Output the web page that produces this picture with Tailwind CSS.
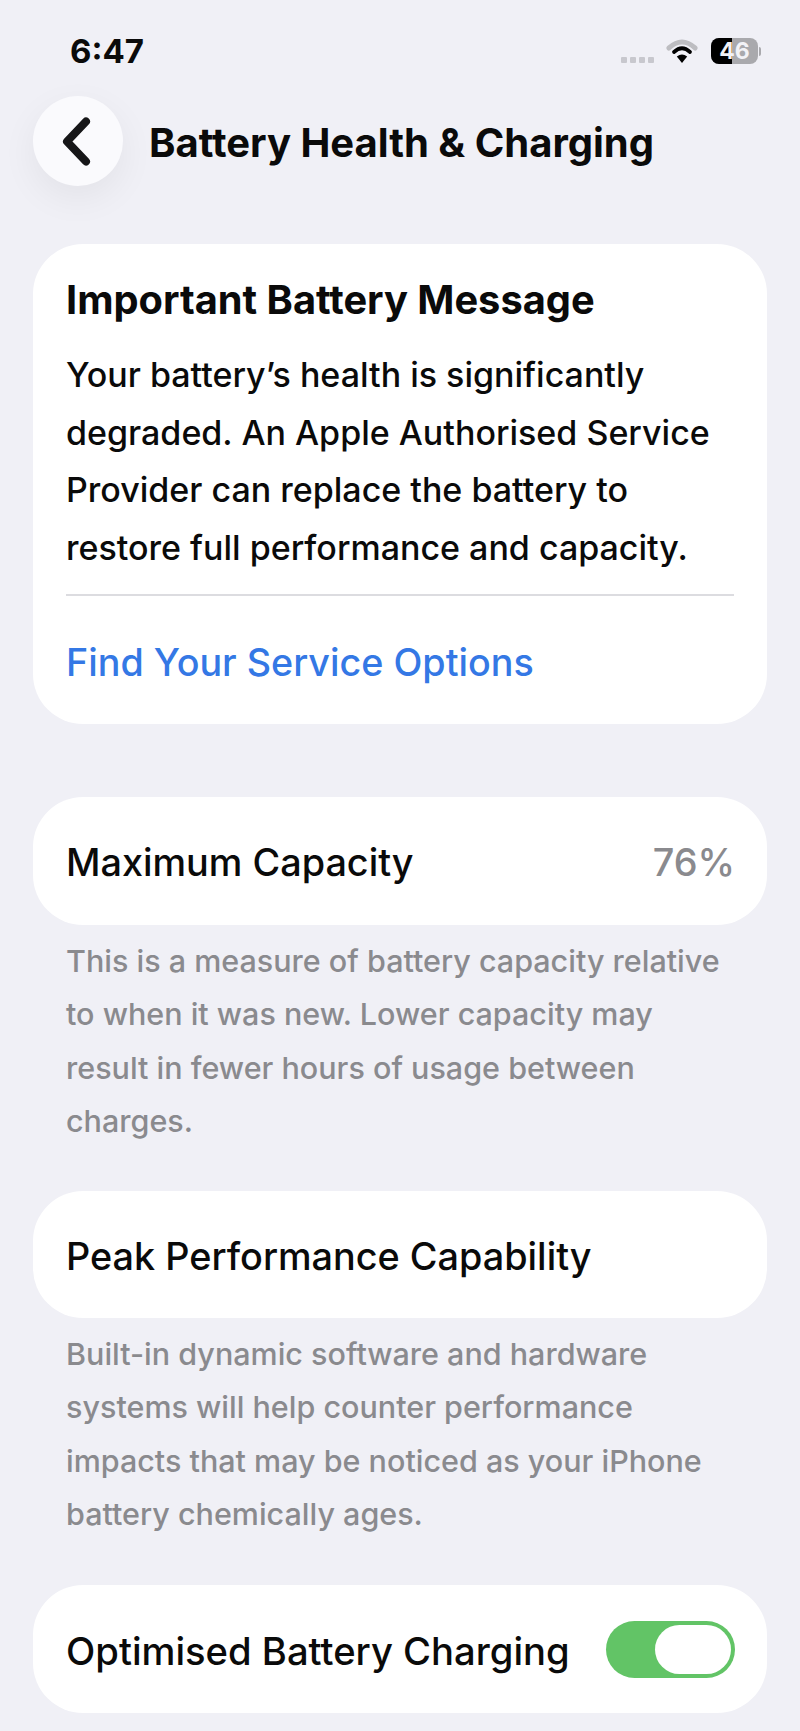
<!DOCTYPE html>
<html>
  <head>
    <title>Battery Health &amp; Charging</title>
    <script src="https://cdn.jsdelivr.net/npm/@tailwindcss/browser@4"></script>
  </head>
  <body class="bg-[#f0f0f6] font-['Inter','Liberation_Sans',sans-serif] text-[#0a0a0a] overflow-hidden">
    <div class="w-[800px] h-[1731px] overflow-hidden">
      <!-- status bar -->
      <div class="flex items-center justify-between h-[50px] mt-[26px] pl-[70px] pr-[39px]">
        <span class="text-[33px] font-bold leading-none">6:47</span>
        <div class="flex items-center">
          <div class="flex gap-[3px] mt-[18px] mr-[12px]">
            <span class="w-[6px] h-[6px] rounded-[1px] bg-[#c8c8ce]"></span>
            <span class="w-[6px] h-[6px] rounded-[1px] bg-[#c8c8ce]"></span>
            <span class="w-[6px] h-[6px] rounded-[1px] bg-[#c8c8ce]"></span>
            <span class="w-[6px] h-[6px] rounded-[1px] bg-[#c8c8ce]"></span>
          </div>
          <svg width="32" height="26" viewBox="0 0 34 26" class="mr-[13px]" preserveAspectRatio="none">
            <path d="M3 10 Q17 -2 31 10" fill="none" stroke="#bdbdc1" stroke-width="5" stroke-linecap="round" />
            <path d="M8.500 14 Q17 6.500 25.500 14" fill="none" stroke="#000" stroke-width="4" stroke-linecap="round" />
            <path d="M17 25 L11.500 18.500 Q17 14.500 22.500 18.500 Z" fill="#000" />
          </svg>
          <div class="relative w-[47px] h-[26px] rounded-[8px] overflow-hidden bg-[#a9a9ad] flex items-center justify-center">
            <div class="absolute left-0 top-0 bottom-0 w-[21px] bg-black"></div>
            <span class="relative text-[23px] font-bold leading-none text-[#f2f2f6]">46</span>
          </div>
          <div class="w-[2px] h-[9px] ml-[1px] rounded-r-full bg-[#a9a9ad]"></div>
        </div>
      </div>

      <!-- header -->
      <div class="flex items-center h-[90px] mt-[20px] pl-[33px]">
        <button class="flex items-center justify-center w-[90px] h-[90px] rounded-full bg-[#fafafd] shadow-[0_12px_36px_rgba(0,0,0,0.06)]">
          <svg width="31" height="49" viewBox="0 0 31 49" class="mr-[3px]">
            <path d="M25 4.500 L6 24.500 L25 44.500" fill="none" stroke="#161618" stroke-width="8" stroke-linecap="round" stroke-linejoin="round" />
          </svg>
        </button>
        <h1 class="ml-[26px] mt-[4px] text-[40px] font-bold leading-none">Battery Health &amp; Charging</h1>
      </div>

      <div class="mx-[33px] mt-[58px]">
        <!-- battery message -->
        <div class="bg-white rounded-[50px] h-[480px] px-[33px] pt-[36px]">
          <h2 class="text-[39.800px] font-bold leading-[40px]">Important Battery Message</h2>
          <p class="mt-[26px] text-[34px] font-medium leading-[57.700px]">Your battery’s health is significantly degraded. An Apple Authorised Service Provider can replace the battery to restore full performance and capacity.</p>
          <div class="mt-[17px] h-[2px] bg-[#dcdce0]"></div>
          <div class="mt-[44px] text-[37.700px] font-medium leading-[44px] text-[#3478e5]">Find Your Service Options</div>
        </div>

        <!-- maximum capacity -->
        <div class="flex items-center justify-between bg-white rounded-[50px] h-[128px] mt-[73px] pl-[33px] pr-[32px] pt-[2px] text-[37.800px] font-medium">
          <span>Maximum Capacity</span>
          <span class="text-[#8a8a8e]">76%</span>
        </div>
        <p class="mt-[9px] mb-[44px] px-[33px] text-[30.500px] font-medium leading-[53.300px] text-[#8a8a8e]">This is a measure of battery capacity relative to when it was new. Lower capacity may result in fewer hours of usage between charges.</p>

        <!-- peak performance -->
        <div class="flex items-center bg-white rounded-[50px] h-[127px] px-[33px] pt-[3px] text-[37.800px] font-medium">
          <span>Peak Performance Capability</span>
        </div>
        <p class="mt-[9px] mb-[45px] px-[33px] text-[30.500px] font-medium leading-[53.300px] text-[#8a8a8e]">Built-in dynamic software and hardware systems will help counter performance impacts that may be noticed as your iPhone battery chemically ages.</p>

        <!-- optimised charging -->
        <div class="flex items-center justify-between bg-white rounded-[50px] h-[128px] pl-[33px] pr-[32px] text-[38.200px] font-medium">
          <span class="pt-[4px]">Optimised Battery Charging</span>
          <div class="flex items-center justify-end w-[129px] h-[57px] p-[4px] rounded-full bg-[#62c466]">
            <div class="w-[76px] h-[49px] rounded-full bg-white"></div>
          </div>
        </div>
      </div>
    </div>
  </body>
</html>
